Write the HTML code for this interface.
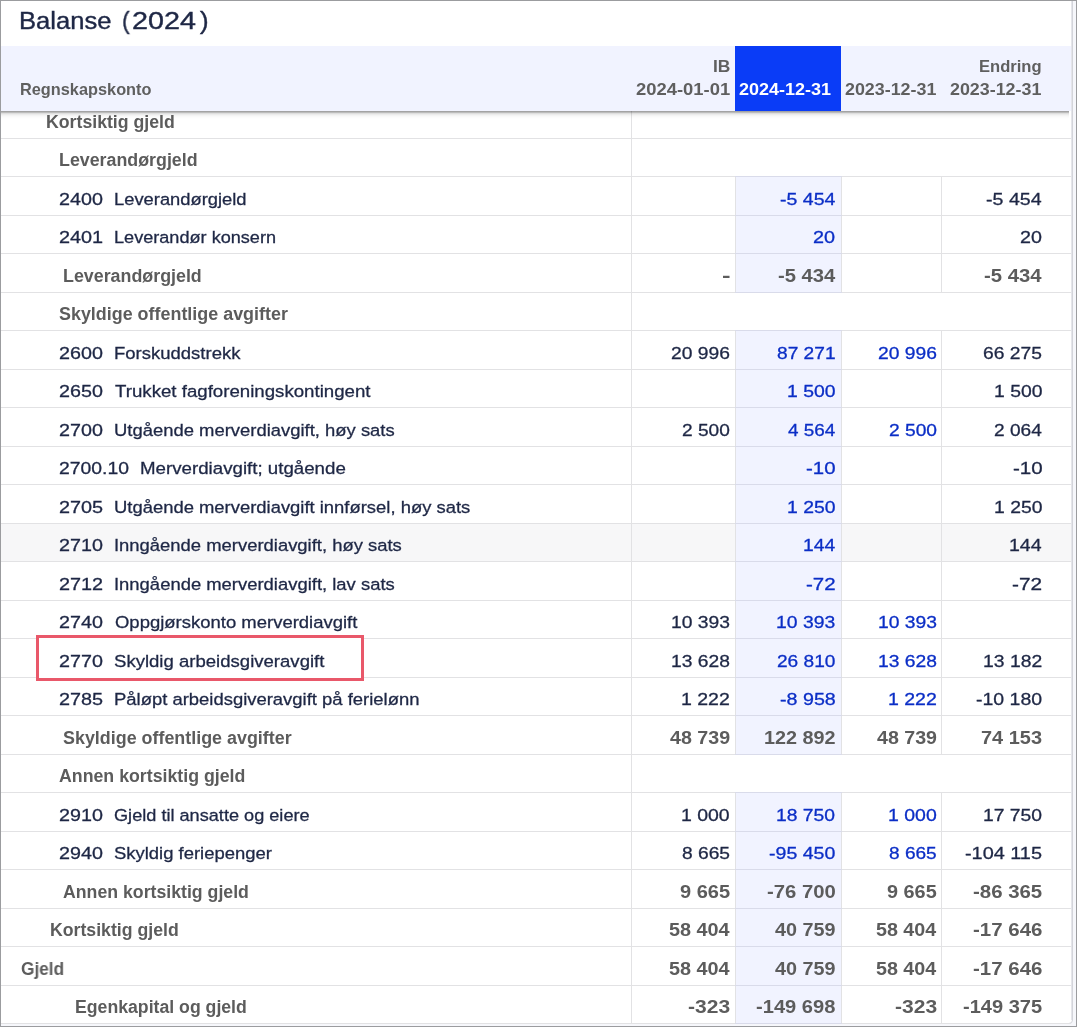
<!DOCTYPE html>
<html lang="nb"><head><meta charset="utf-8"><title>Balanse (2024)</title>
<style>
html,body{margin:0;padding:0;}
body{width:1077px;height:1027px;overflow:hidden;background:#f6f7fb;font-family:"Liberation Sans",sans-serif;position:relative;}
#frame{position:absolute;left:0;top:0;width:1075px;height:1025px;border:1px solid #9b9c9f;z-index:50;pointer-events:none;}
#panel{position:absolute;left:-4px;top:-4px;width:1075px;height:1026px;background:#fff;border:1px solid #d3d4da;border-radius:0 0 4px 0;box-sizing:content-box;}
.hl{position:absolute;left:0;width:1071px;height:1px;background:#e2e2e4;}
.vl{position:absolute;width:1px;background:#e2e2e4;}
.hi{position:absolute;left:736px;width:105px;background:#f1f3ff;}
.hov{position:absolute;left:1px;width:1070px;background:#f7f7f8;}
#thead{position:absolute;left:1px;top:46px;width:1070px;height:65px;background:#f1f3ff;z-index:5;}
#thsel{position:absolute;left:735px;top:46px;width:106px;height:65px;background:#0a3cf7;z-index:6;}
#shadow{position:absolute;left:1px;top:111px;width:1068px;height:8px;z-index:5;background:linear-gradient(to bottom,rgba(0,0,0,.36) 0,rgba(0,0,0,.36) 1px,rgba(0,0,0,.17) 2px,rgba(0,0,0,.09) 3px,rgba(0,0,0,.045) 4.5px,rgba(0,0,0,.015) 6px,rgba(0,0,0,0) 8px);border-radius:0 0 2px 0;}
#rl{position:absolute;left:1071px;top:1px;width:1px;height:1019px;background:#e4e5ea;z-index:7;}
.t{position:absolute;transform-origin:0 0;will-change:transform;white-space:pre;line-height:20px;height:20px;z-index:10;}
.reg{font-size:17.4px;color:#1e2745;-webkit-text-stroke:0.3px #1e2745;}
.blue{font-size:17.4px;color:#0b2ec6;-webkit-text-stroke:0.3px #0b2ec6;}
.bold{font-size:17.6px;font-weight:bold;color:#5c5c5c;}
.th{font-size:16.1px;font-weight:bold;color:#5f5f5f;}
.thw{font-size:16.1px;font-weight:bold;color:#fff;}
.ttl{font-size:24.6px;color:#1e2745;-webkit-text-stroke:0.4px #1e2745;line-height:30px;height:30px;}
#mark{position:absolute;left:36px;top:635px;width:322px;height:40px;border:3px solid #e9586a;background:#fff;z-index:8;}
</style></head><body>
<div id="panel"></div>

<div class="hi" style="top:177px;height:38px"></div>
<div class="hi" style="top:216px;height:37px"></div>
<div class="hi" style="top:254px;height:38px"></div>
<div class="hi" style="top:331px;height:38px"></div>
<div class="hi" style="top:370px;height:37px"></div>
<div class="hi" style="top:408px;height:38px"></div>
<div class="hi" style="top:447px;height:37px"></div>
<div class="hi" style="top:485px;height:38px"></div>
<div class="hov" style="top:524px;height:37px"></div>
<div class="hi" style="top:524px;height:37px"></div>
<div class="hi" style="top:562px;height:38px"></div>
<div class="hi" style="top:601px;height:37px"></div>
<div class="hi" style="top:639px;height:38px"></div>
<div class="hi" style="top:678px;height:37px"></div>
<div class="hi" style="top:716px;height:38px"></div>
<div class="hi" style="top:793px;height:38px"></div>
<div class="hi" style="top:832px;height:37px"></div>
<div class="hi" style="top:870px;height:38px"></div>
<div class="hi" style="top:909px;height:37px"></div>
<div class="hi" style="top:947px;height:38px"></div>
<div class="hi" style="top:986px;height:37px"></div>
<div class="hl" style="top:138px"></div>
<div class="hl" style="top:176px"></div>
<div class="hl" style="top:215px"></div>
<div class="hl" style="top:253px"></div>
<div class="hl" style="top:292px"></div>
<div class="hl" style="top:330px"></div>
<div class="hl" style="top:369px"></div>
<div class="hl" style="top:407px"></div>
<div class="hl" style="top:446px"></div>
<div class="hl" style="top:484px"></div>
<div class="hl" style="top:523px"></div>
<div class="hl" style="top:561px"></div>
<div class="hl" style="top:600px"></div>
<div class="hl" style="top:638px"></div>
<div class="hl" style="top:677px"></div>
<div class="hl" style="top:715px"></div>
<div class="hl" style="top:754px"></div>
<div class="hl" style="top:792px"></div>
<div class="hl" style="top:831px"></div>
<div class="hl" style="top:869px"></div>
<div class="hl" style="top:908px"></div>
<div class="hl" style="top:946px"></div>
<div class="hl" style="top:985px"></div>
<div class="hl" style="top:1023px"></div>
<div class="hl" style="top:176px;left:735px;width:107px;background:#d9dbea"></div>
<div class="hl" style="top:215px;left:735px;width:107px;background:#d9dbea"></div>
<div class="hl" style="top:253px;left:735px;width:107px;background:#d9dbea"></div>
<div class="hl" style="top:292px;left:735px;width:107px;background:#d9dbea"></div>
<div class="hl" style="top:330px;left:735px;width:107px;background:#d9dbea"></div>
<div class="hl" style="top:369px;left:735px;width:107px;background:#d9dbea"></div>
<div class="hl" style="top:407px;left:735px;width:107px;background:#d9dbea"></div>
<div class="hl" style="top:446px;left:735px;width:107px;background:#d9dbea"></div>
<div class="hl" style="top:484px;left:735px;width:107px;background:#d9dbea"></div>
<div class="hl" style="top:523px;left:735px;width:107px;background:#d9dbea"></div>
<div class="hl" style="top:561px;left:735px;width:107px;background:#d9dbea"></div>
<div class="hl" style="top:600px;left:735px;width:107px;background:#d9dbea"></div>
<div class="hl" style="top:638px;left:735px;width:107px;background:#d9dbea"></div>
<div class="hl" style="top:677px;left:735px;width:107px;background:#d9dbea"></div>
<div class="hl" style="top:715px;left:735px;width:107px;background:#d9dbea"></div>
<div class="hl" style="top:754px;left:735px;width:107px;background:#d9dbea"></div>
<div class="hl" style="top:792px;left:735px;width:107px;background:#d9dbea"></div>
<div class="hl" style="top:831px;left:735px;width:107px;background:#d9dbea"></div>
<div class="hl" style="top:869px;left:735px;width:107px;background:#d9dbea"></div>
<div class="hl" style="top:908px;left:735px;width:107px;background:#d9dbea"></div>
<div class="hl" style="top:946px;left:735px;width:107px;background:#d9dbea"></div>
<div class="hl" style="top:985px;left:735px;width:107px;background:#d9dbea"></div>
<div class="hl" style="top:1023px;left:735px;width:107px;background:#d9dbea"></div>
<div class="vl" style="left:631px;top:100px;height:923px"></div>
<div class="vl" style="left:735px;top:177px;height:38px"></div>
<div class="vl" style="left:841px;top:177px;height:38px"></div>
<div class="vl" style="left:941px;top:177px;height:38px"></div>
<div class="vl" style="left:735px;top:216px;height:37px"></div>
<div class="vl" style="left:841px;top:216px;height:37px"></div>
<div class="vl" style="left:941px;top:216px;height:37px"></div>
<div class="vl" style="left:735px;top:254px;height:38px"></div>
<div class="vl" style="left:841px;top:254px;height:38px"></div>
<div class="vl" style="left:941px;top:254px;height:38px"></div>
<div class="vl" style="left:735px;top:331px;height:38px"></div>
<div class="vl" style="left:841px;top:331px;height:38px"></div>
<div class="vl" style="left:941px;top:331px;height:38px"></div>
<div class="vl" style="left:735px;top:370px;height:37px"></div>
<div class="vl" style="left:841px;top:370px;height:37px"></div>
<div class="vl" style="left:941px;top:370px;height:37px"></div>
<div class="vl" style="left:735px;top:408px;height:38px"></div>
<div class="vl" style="left:841px;top:408px;height:38px"></div>
<div class="vl" style="left:941px;top:408px;height:38px"></div>
<div class="vl" style="left:735px;top:447px;height:37px"></div>
<div class="vl" style="left:841px;top:447px;height:37px"></div>
<div class="vl" style="left:941px;top:447px;height:37px"></div>
<div class="vl" style="left:735px;top:485px;height:38px"></div>
<div class="vl" style="left:841px;top:485px;height:38px"></div>
<div class="vl" style="left:941px;top:485px;height:38px"></div>
<div class="vl" style="left:735px;top:524px;height:37px"></div>
<div class="vl" style="left:841px;top:524px;height:37px"></div>
<div class="vl" style="left:941px;top:524px;height:37px"></div>
<div class="vl" style="left:735px;top:562px;height:38px"></div>
<div class="vl" style="left:841px;top:562px;height:38px"></div>
<div class="vl" style="left:941px;top:562px;height:38px"></div>
<div class="vl" style="left:735px;top:601px;height:37px"></div>
<div class="vl" style="left:841px;top:601px;height:37px"></div>
<div class="vl" style="left:941px;top:601px;height:37px"></div>
<div class="vl" style="left:735px;top:639px;height:38px"></div>
<div class="vl" style="left:841px;top:639px;height:38px"></div>
<div class="vl" style="left:941px;top:639px;height:38px"></div>
<div class="vl" style="left:735px;top:678px;height:37px"></div>
<div class="vl" style="left:841px;top:678px;height:37px"></div>
<div class="vl" style="left:941px;top:678px;height:37px"></div>
<div class="vl" style="left:735px;top:716px;height:38px"></div>
<div class="vl" style="left:841px;top:716px;height:38px"></div>
<div class="vl" style="left:941px;top:716px;height:38px"></div>
<div class="vl" style="left:735px;top:793px;height:38px"></div>
<div class="vl" style="left:841px;top:793px;height:38px"></div>
<div class="vl" style="left:941px;top:793px;height:38px"></div>
<div class="vl" style="left:735px;top:832px;height:37px"></div>
<div class="vl" style="left:841px;top:832px;height:37px"></div>
<div class="vl" style="left:941px;top:832px;height:37px"></div>
<div class="vl" style="left:735px;top:870px;height:38px"></div>
<div class="vl" style="left:841px;top:870px;height:38px"></div>
<div class="vl" style="left:941px;top:870px;height:38px"></div>
<div class="vl" style="left:735px;top:909px;height:37px"></div>
<div class="vl" style="left:841px;top:909px;height:37px"></div>
<div class="vl" style="left:941px;top:909px;height:37px"></div>
<div class="vl" style="left:735px;top:947px;height:38px"></div>
<div class="vl" style="left:841px;top:947px;height:38px"></div>
<div class="vl" style="left:941px;top:947px;height:38px"></div>
<div class="vl" style="left:735px;top:986px;height:37px"></div>
<div class="vl" style="left:841px;top:986px;height:37px"></div>
<div class="vl" style="left:941px;top:986px;height:37px"></div>
<div id="rl"></div><div id="thead"></div><div id="thsel"></div><div id="shadow"></div><div id="mark"></div>
<div id="title"><span id="e0" class="t ttl" style="left:19.46px;top:6.00px;transform:scaleX(1.0396)">Balanse</span> <span id="e1" class="t ttl" style="left:121.55px;top:6.00px;transform:scaleX(0.9296)">(</span><span id="e2" class="t ttl" style="left:132.26px;top:6.00px;transform:scaleX(1.1679)">2024</span><span id="e3" class="t ttl" style="left:199.91px;top:6.00px;transform:scaleX(1.0493)">)</span></div>
<span id="e4" class="t th" style="left:20.27px;top:79.00px;transform:scaleX(1.0139)">Regnskapskonto</span>
<span id="e5" class="t th" style="left:713.27px;top:56.00px;transform:scaleX(1.0818)">IB</span>
<span id="e6" class="t th" style="left:636.13px;top:79.00px;transform:scaleX(1.1435)">2024-01-01</span>
<span id="e7" class="t thw" style="left:739.20px;top:79.00px;transform:scaleX(1.1170)">2024-12-31</span>
<span id="e8" class="t th" style="left:845.34px;top:79.00px;transform:scaleX(1.1100)">2023-12-31</span>
<span id="e9" class="t th" style="left:979.37px;top:56.00px;transform:scaleX(1.0302)">Endring</span>
<span id="e10" class="t th" style="left:950.36px;top:79.00px;transform:scaleX(1.1100)">2023-12-31</span>
<span id="e11" class="t bold" style="left:46.11px;top:112.00px;transform:scaleX(1.0060)">Kortsiktig gjeld</span>
<span id="e12" class="t bold" style="left:58.70px;top:150.00px;transform:scaleX(1.0126)">Leverandørgjeld</span>
<span id="e13" class="t reg" style="left:59.37px;top:189.00px;transform:scaleX(1.1340)">2400</span>
<span id="e14" class="t reg" style="left:113.86px;top:189.00px;transform:scaleX(1.0549)">Leverandørgjeld</span>
<span id="e15" class="t blue" style="left:779.67px;top:189.00px;transform:scaleX(1.1229)">-5 454</span>
<span id="e16" class="t reg" style="left:986.17px;top:189.00px;transform:scaleX(1.1282)">-5 454</span>
<span id="e17" class="t reg" style="left:58.73px;top:227.00px;transform:scaleX(1.1416)">2401</span>
<span id="e18" class="t reg" style="left:113.52px;top:227.00px;transform:scaleX(1.0412)">Leverandør konsern</span>
<span id="e19" class="t blue" style="left:813.46px;top:227.00px;transform:scaleX(1.1392)">20</span>
<span id="e20" class="t reg" style="left:1020.06px;top:227.00px;transform:scaleX(1.1317)">20</span>
<span id="e21" class="t bold" style="left:62.76px;top:266.00px;transform:scaleX(1.0137)">Leverandørgjeld</span>
<span id="e22" class="t bold" style="left:721.53px;top:266.00px;transform:scaleX(1.4571)">-</span>
<span id="e23" class="t bold" style="left:777.76px;top:266.00px;transform:scaleX(1.1487)">-5 434</span>
<span id="e24" class="t bold" style="left:984.49px;top:266.00px;transform:scaleX(1.1520)">-5 434</span>
<span id="e25" class="t bold" style="left:59.22px;top:304.00px;transform:scaleX(1.0178)">Skyldige offentlige avgifter</span>
<span id="e26" class="t reg" style="left:59.37px;top:343.00px;transform:scaleX(1.1340)">2600</span>
<span id="e27" class="t reg" style="left:113.91px;top:343.00px;transform:scaleX(1.0638)">Forskuddstrekk</span>
<span id="e28" class="t reg" style="left:671.46px;top:343.00px;transform:scaleX(1.1063)">20 996</span>
<span id="e29" class="t blue" style="left:776.78px;top:343.00px;transform:scaleX(1.1006)">87 271</span>
<span id="e30" class="t blue" style="left:878.17px;top:343.00px;transform:scaleX(1.1059)">20 996</span>
<span id="e31" class="t reg" style="left:983.31px;top:343.00px;transform:scaleX(1.1061)">66 275</span>
<span id="e32" class="t reg" style="left:59.37px;top:381.00px;transform:scaleX(1.1340)">2650</span>
<span id="e33" class="t reg" style="left:114.87px;top:381.00px;transform:scaleX(1.0730)">Trukket fagforeningskontingent</span>
<span id="e34" class="t blue" style="left:786.84px;top:381.00px;transform:scaleX(1.1144)">1 500</span>
<span id="e35" class="t reg" style="left:993.65px;top:381.00px;transform:scaleX(1.1130)">1 500</span>
<span id="e36" class="t reg" style="left:59.37px;top:420.00px;transform:scaleX(1.1340)">2700</span>
<span id="e37" class="t reg" style="left:113.86px;top:420.00px;transform:scaleX(1.0599)">Utgående merverdiavgift, høy sats</span>
<span id="e38" class="t reg" style="left:681.53px;top:420.00px;transform:scaleX(1.0984)">2 500</span>
<span id="e39" class="t blue" style="left:787.85px;top:420.00px;transform:scaleX(1.0863)">4 564</span>
<span id="e40" class="t blue" style="left:888.74px;top:420.00px;transform:scaleX(1.1041)">2 500</span>
<span id="e41" class="t reg" style="left:993.82px;top:420.00px;transform:scaleX(1.0974)">2 064</span>
<span id="e42" class="t reg" style="left:59.41px;top:458.00px;transform:scaleX(1.1123)">2700.10</span>
<span id="e43" class="t reg" style="left:139.84px;top:458.00px;transform:scaleX(1.0752)">Merverdiavgift; utgående</span>
<span id="e44" class="t blue" style="left:805.82px;top:458.00px;transform:scaleX(1.1726)">-10</span>
<span id="e45" class="t reg" style="left:1012.76px;top:458.00px;transform:scaleX(1.1822)">-10</span>
<span id="e46" class="t reg" style="left:59.26px;top:497.00px;transform:scaleX(1.1393)">2705</span>
<span id="e47" class="t reg" style="left:113.87px;top:497.00px;transform:scaleX(1.0591)">Utgående merverdiavgift innførsel, høy sats</span>
<span id="e48" class="t blue" style="left:786.84px;top:497.00px;transform:scaleX(1.1144)">1 250</span>
<span id="e49" class="t reg" style="left:993.65px;top:497.00px;transform:scaleX(1.1130)">1 250</span>
<span id="e50" class="t reg" style="left:59.37px;top:535.00px;transform:scaleX(1.1334)">2710</span>
<span id="e51" class="t reg" style="left:113.54px;top:535.00px;transform:scaleX(1.0595)">Inngående merverdiavgift, høy sats</span>
<span id="e52" class="t blue" style="left:802.60px;top:535.00px;transform:scaleX(1.1077)">144</span>
<span id="e53" class="t reg" style="left:1009.47px;top:535.00px;transform:scaleX(1.1243)">144</span>
<span id="e54" class="t reg" style="left:58.74px;top:574.00px;transform:scaleX(1.1402)">2712</span>
<span id="e55" class="t reg" style="left:113.80px;top:574.00px;transform:scaleX(1.0599)">Inngående merverdiavgift, lav sats</span>
<span id="e56" class="t blue" style="left:805.52px;top:574.00px;transform:scaleX(1.1782)">-72</span>
<span id="e57" class="t reg" style="left:1012.28px;top:574.00px;transform:scaleX(1.1962)">-72</span>
<span id="e58" class="t reg" style="left:59.37px;top:612.00px;transform:scaleX(1.1340)">2740</span>
<span id="e59" class="t reg" style="left:114.63px;top:612.00px;transform:scaleX(1.0626)">Oppgjørskonto merverdiavgift</span>
<span id="e60" class="t reg" style="left:670.88px;top:612.00px;transform:scaleX(1.1088)">10 393</span>
<span id="e61" class="t blue" style="left:776.39px;top:612.00px;transform:scaleX(1.1122)">10 393</span>
<span id="e62" class="t blue" style="left:877.55px;top:612.00px;transform:scaleX(1.1098)">10 393</span>
<span id="e63" class="t reg" style="left:59.37px;top:651.00px;transform:scaleX(1.1340)">2770</span>
<span id="e64" class="t reg" style="left:114.29px;top:651.00px;transform:scaleX(1.0669)">Skyldig arbeidsgiveravgift</span>
<span id="e65" class="t reg" style="left:670.56px;top:651.00px;transform:scaleX(1.1059)">13 628</span>
<span id="e66" class="t blue" style="left:776.62px;top:651.00px;transform:scaleX(1.0976)">26 810</span>
<span id="e67" class="t blue" style="left:877.54px;top:651.00px;transform:scaleX(1.1078)">13 628</span>
<span id="e68" class="t reg" style="left:983.11px;top:651.00px;transform:scaleX(1.1118)">13 182</span>
<span id="e69" class="t reg" style="left:59.26px;top:689.00px;transform:scaleX(1.1393)">2785</span>
<span id="e70" class="t reg" style="left:113.78px;top:689.00px;transform:scaleX(1.0602)">Påløpt arbeidsgiveravgift på ferielønn</span>
<span id="e71" class="t reg" style="left:681.47px;top:689.00px;transform:scaleX(1.1220)">1 222</span>
<span id="e72" class="t blue" style="left:779.62px;top:689.00px;transform:scaleX(1.1321)">-8 958</span>
<span id="e73" class="t blue" style="left:888.12px;top:689.00px;transform:scaleX(1.1219)">1 222</span>
<span id="e74" class="t reg" style="left:975.50px;top:689.00px;transform:scaleX(1.1202)">-10 180</span>
<span id="e75" class="t bold" style="left:63.06px;top:728.00px;transform:scaleX(1.0168)">Skyldige offentlige avgifter</span>
<span id="e76" class="t bold" style="left:670.19px;top:728.00px;transform:scaleX(1.1158)">48 739</span>
<span id="e77" class="t bold" style="left:763.94px;top:728.00px;transform:scaleX(1.1266)">122 892</span>
<span id="e78" class="t bold" style="left:876.58px;top:728.00px;transform:scaleX(1.1149)">48 739</span>
<span id="e79" class="t bold" style="left:981.29px;top:728.00px;transform:scaleX(1.1339)">74 153</span>
<span id="e80" class="t bold" style="left:59.27px;top:766.00px;transform:scaleX(1.0086)">Annen kortsiktig gjeld</span>
<span id="e81" class="t reg" style="left:59.37px;top:805.00px;transform:scaleX(1.1340)">2910</span>
<span id="e82" class="t reg" style="left:114.38px;top:805.00px;transform:scaleX(1.0430)">Gjeld til ansatte og eiere</span>
<span id="e83" class="t reg" style="left:681.16px;top:805.00px;transform:scaleX(1.1189)">1 000</span>
<span id="e84" class="t blue" style="left:776.34px;top:805.00px;transform:scaleX(1.1081)">18 750</span>
<span id="e85" class="t blue" style="left:888.11px;top:805.00px;transform:scaleX(1.1190)">1 000</span>
<span id="e86" class="t reg" style="left:983.04px;top:805.00px;transform:scaleX(1.1098)">17 750</span>
<span id="e87" class="t reg" style="left:59.37px;top:843.00px;transform:scaleX(1.1340)">2940</span>
<span id="e88" class="t reg" style="left:114.47px;top:843.00px;transform:scaleX(1.0602)">Skyldig feriepenger</span>
<span id="e89" class="t reg" style="left:682.18px;top:843.00px;transform:scaleX(1.1040)">8 665</span>
<span id="e90" class="t blue" style="left:769.11px;top:843.00px;transform:scaleX(1.1237)">-95 450</span>
<span id="e91" class="t blue" style="left:888.60px;top:843.00px;transform:scaleX(1.0960)">8 665</span>
<span id="e92" class="t reg" style="left:965.19px;top:843.00px;transform:scaleX(1.1424)">-104 115</span>
<span id="e93" class="t bold" style="left:62.66px;top:882.00px;transform:scaleX(1.0063)">Annen kortsiktig gjeld</span>
<span id="e94" class="t bold" style="left:680.46px;top:882.00px;transform:scaleX(1.1384)">9 665</span>
<span id="e95" class="t bold" style="left:766.78px;top:882.00px;transform:scaleX(1.1538)">-76 700</span>
<span id="e96" class="t bold" style="left:887.09px;top:882.00px;transform:scaleX(1.1286)">9 665</span>
<span id="e97" class="t bold" style="left:973.24px;top:882.00px;transform:scaleX(1.1600)">-86 365</span>
<span id="e98" class="t bold" style="left:50.38px;top:920.00px;transform:scaleX(1.0049)">Kortsiktig gjeld</span>
<span id="e99" class="t bold" style="left:669.44px;top:920.00px;transform:scaleX(1.1268)">58 404</span>
<span id="e100" class="t bold" style="left:775.41px;top:920.00px;transform:scaleX(1.1236)">40 759</span>
<span id="e101" class="t bold" style="left:876.47px;top:920.00px;transform:scaleX(1.1191)">58 404</span>
<span id="e102" class="t bold" style="left:973.36px;top:920.00px;transform:scaleX(1.1635)">-17 646</span>
<span id="e103" class="t bold" style="left:20.66px;top:959.00px;transform:scaleX(0.9801)">Gjeld</span>
<span id="e104" class="t bold" style="left:669.44px;top:959.00px;transform:scaleX(1.1268)">58 404</span>
<span id="e105" class="t bold" style="left:775.41px;top:959.00px;transform:scaleX(1.1236)">40 759</span>
<span id="e106" class="t bold" style="left:876.47px;top:959.00px;transform:scaleX(1.1191)">58 404</span>
<span id="e107" class="t bold" style="left:973.36px;top:959.00px;transform:scaleX(1.1635)">-17 646</span>
<span id="e108" class="t bold" style="left:75.22px;top:997.00px;transform:scaleX(1.0044)">Egenkapital og gjeld</span>
<span id="e109" class="t bold" style="left:687.89px;top:997.00px;transform:scaleX(1.1947)">-323</span>
<span id="e110" class="t bold" style="left:756.17px;top:997.00px;transform:scaleX(1.1429)">-149 698</span>
<span id="e111" class="t bold" style="left:894.57px;top:997.00px;transform:scaleX(1.1948)">-323</span>
<span id="e112" class="t bold" style="left:962.62px;top:997.00px;transform:scaleX(1.1400)">-149 375</span>
<div id="frame"></div>
</body></html>
